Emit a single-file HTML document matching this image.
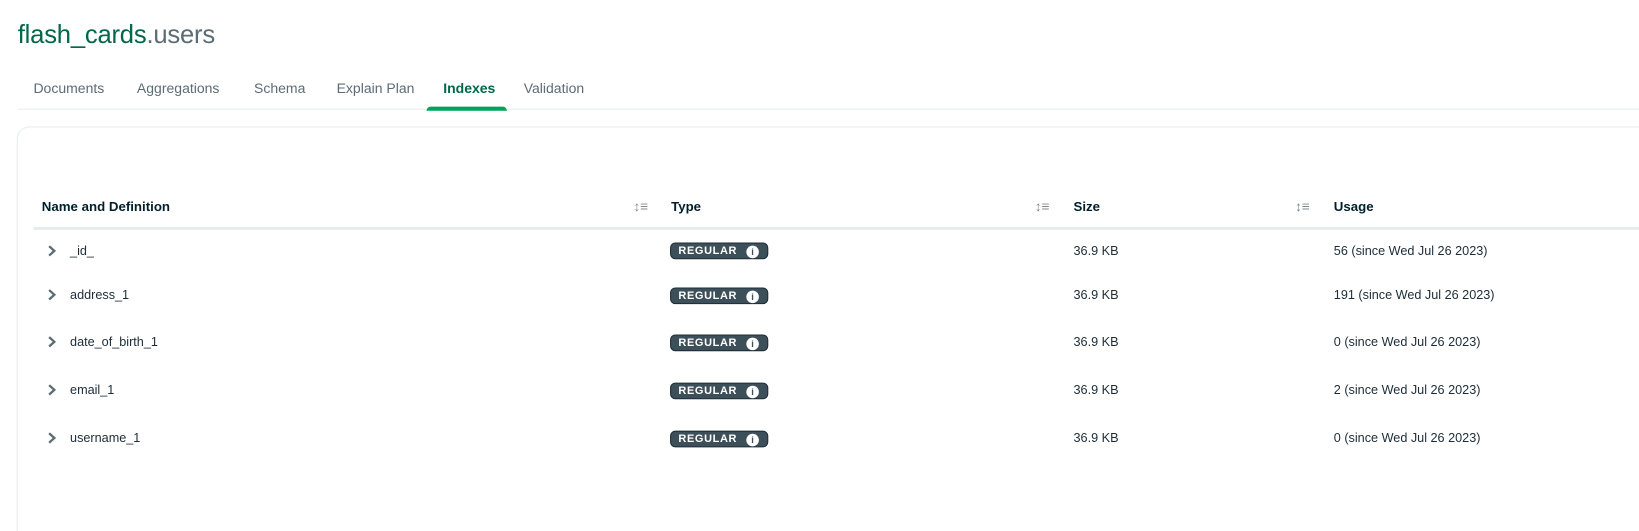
<!DOCTYPE html>
<html><head><style>
body{margin:0;width:1639px;height:531px;overflow:hidden;background:#fff;font-family:"Liberation Sans",sans-serif;color:#1c2d38}
#w{position:absolute;left:0;top:0;width:1568px;height:508px;transform:scale(1.0453);transform-origin:0 0;overflow:hidden}
.t{position:absolute;left:17px;top:20px;font-size:24.5px;color:#00684a;letter-spacing:-0.2px}
.t span{color:#5c6c75}
.tab{position:absolute;top:77px;font-size:13.4px;color:#5c6c75}
.ul{position:absolute;left:17px;right:0;top:104px;height:1px;background:#e8edeb}
.act{position:absolute;left:408px;top:102px;width:77px;height:4px;background:#00a35c;border-radius:4px 4px 0 0}
.card{position:absolute;left:16px;top:121px;width:1640px;height:400px;border:1px solid #e8edeb;border-radius:12px}
.h{position:absolute;top:191px;font-size:12.7px;font-weight:bold;color:#001e2b}
.hl{position:absolute;left:32px;right:0;top:217px;height:3px;background:#e8edeb}
.s{position:absolute;top:190px;font-size:13px;color:#7c8a90}
.c{position:absolute;font-size:12.1px;color:#1c2d38}
.chev{position:absolute;left:43px}
.b{position:absolute;left:641px;width:94px;height:16px;background:#3d4f58;border:1px solid #1c2d38;border-radius:5px;color:#fff;font-size:10.5px;font-weight:bold;letter-spacing:.6px;box-sizing:border-box;padding:1px 0 0 7px}
.b i{position:absolute;right:8px;top:1.5px;width:12px;height:12px;border-radius:50%;background:#fff;color:#3d4f58;font-style:normal;font-size:9px;font-weight:bold;text-align:center;line-height:12px;letter-spacing:0}
</style></head><body><div id="w">
<div class="t">flash_cards<span>.users</span></div>
<div class="tab" style="left:32px">Documents</div>
<div class="tab" style="left:131px">Aggregations</div>
<div class="tab" style="left:243px">Schema</div>
<div class="tab" style="left:322px">Explain Plan</div>
<div class="tab" style="left:424px;color:#00684a;font-weight:bold">Indexes</div>
<div class="tab" style="left:501px">Validation</div>
<div class="ul"></div><div class="act"></div>
<div class="card"></div>
<div class="h" style="left:40px">Name and Definition</div>
<div class="h" style="left:642px">Type</div>
<div class="h" style="left:1027px">Size</div>
<div class="h" style="left:1276px">Usage</div>
<div class="s" style="left:606px">↕≡</div>
<div class="s" style="left:990px">↕≡</div>
<div class="s" style="left:1239px">↕≡</div>
<div class="hl"></div>

<svg class="chev" style="top:233px" width="14" height="14"><path d="M4 2.5l5 4.5-5 4.5" stroke="#5c6c75" stroke-width="2.2" fill="none"/></svg>
<div class="c" style="left:67px;top:233px">_id_</div><div class="b" style="top:232px">REGULAR<i>i</i></div>
<div class="c" style="left:1027px;top:233px">36.9 KB</div><div class="c" style="left:1276px;top:233px">56 (since Wed Jul 26 2023)</div>

<svg class="chev" style="top:275px" width="14" height="14"><path d="M4 2.5l5 4.5-5 4.5" stroke="#5c6c75" stroke-width="2.2" fill="none"/></svg>
<div class="c" style="left:67px;top:275px">address_1</div><div class="b" style="top:275px">REGULAR<i>i</i></div>
<div class="c" style="left:1027px;top:275px">36.9 KB</div><div class="c" style="left:1276px;top:275px">191 (since Wed Jul 26 2023)</div>

<svg class="chev" style="top:320px" width="14" height="14"><path d="M4 2.5l5 4.5-5 4.5" stroke="#5c6c75" stroke-width="2.2" fill="none"/></svg>
<div class="c" style="left:67px;top:320px">date_of_birth_1</div><div class="b" style="top:320px">REGULAR<i>i</i></div>
<div class="c" style="left:1027px;top:320px">36.9 KB</div><div class="c" style="left:1276px;top:320px">0 (since Wed Jul 26 2023)</div>

<svg class="chev" style="top:366px" width="14" height="14"><path d="M4 2.5l5 4.5-5 4.5" stroke="#5c6c75" stroke-width="2.2" fill="none"/></svg>
<div class="c" style="left:67px;top:366px">email_1</div><div class="b" style="top:366px">REGULAR<i>i</i></div>
<div class="c" style="left:1027px;top:366px">36.9 KB</div><div class="c" style="left:1276px;top:366px">2 (since Wed Jul 26 2023)</div>

<svg class="chev" style="top:412px" width="14" height="14"><path d="M4 2.5l5 4.5-5 4.5" stroke="#5c6c75" stroke-width="2.2" fill="none"/></svg>
<div class="c" style="left:67px;top:412px">username_1</div><div class="b" style="top:412px">REGULAR<i>i</i></div>
<div class="c" style="left:1027px;top:412px">36.9 KB</div><div class="c" style="left:1276px;top:412px">0 (since Wed Jul 26 2023)</div>
</div></body></html>
